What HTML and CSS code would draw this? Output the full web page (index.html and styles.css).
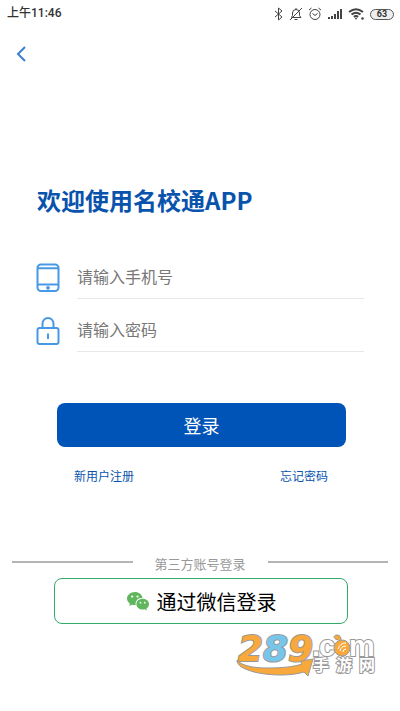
FILE: index.html
```html
<!DOCTYPE html>
<html lang="zh-CN">
<head>
<meta charset="utf-8">
<meta name="viewport" content="width=device-width, initial-scale=1">
<title>登录</title>
<link rel="stylesheet" href="styles.css">
</head>
<body>
<div class="status">
  <span>上午11:46</span>
  <div class="status-icons">
    <svg width="10" height="14" viewBox="0 0 10 14"><path d="M1 4l7 6-3.500 3V1L8 4l-7 6"/></svg>
    <svg width="14" height="14" viewBox="0 0 14 14"><path d="M2.500 10.500h9.500l-1.500-2V6a3.500 3.500 0 0 0-7 0v2.500zM5.500 12.500h3M13 1L1 13M7 1v1.500"/></svg>
    <svg width="14" height="14" viewBox="0 0 14 14"><circle cx="7" cy="7.500" r="5"/><path d="M4.500 6.500L7 8.500l2.500-2M1 3l2.500-2M13 3l-2.500-2"/></svg>
    <svg class="solid" width="16" height="14" viewBox="0 0 16 14"><path d="M1 10h2v2H1zM4 9h2v3H4zM7 7h2v5H7zM10 4h2v8h-2zM13 2h2v10h-2z"/></svg>
    <svg width="17" height="14" viewBox="0 0 17 14"><path class="bold" d="M1 5q7-5.500 14 0M3.500 7.500q4.500-3.500 9 0M5.800 9.800q2.200-1.500 4.400 0"/><path class="dot" d="M8 10.500l1.200 1L8 12.800l-1.200-1.300z"/><circle class="dot" cx="14.500" cy="11.500" r="1.300"/></svg>
    <span class="battery">63</span>
  </div>
</div>
<header class="nav">
  <button class="back" type="button" aria-label="返回">
    <svg width="10" height="16" viewBox="0 0 10 16"><path d="M9 1L2 8l7 7"/></svg>
  </button>
</header>
<main>
  <h1>欢迎使用名校通APP</h1>
  <form class="login">
    <div class="field">
      <label for="phone" aria-label="手机号">
        <svg width="24" height="30" viewBox="0 0 24 30"><rect x="1.500" y="1.500" width="21" height="26.500" rx="3.500"/><path d="M2 5.200h20M2 21.500h20"/><circle class="fill" cx="12" cy="24.800" r="1.900"/></svg>
      </label>
      <input id="phone" type="tel" placeholder="请输入手机号">
    </div>
    <div class="field">
      <label for="password" aria-label="密码">
        <svg width="24" height="30" viewBox="0 0 24 30"><rect x="1.500" y="12" width="21" height="16" rx="2"/><path d="M6.500 12V7.500a5.500 5.500 0 0 1 11 0V12M12 17.500v5.500"/></svg>
      </label>
      <input id="password" type="password" placeholder="请输入密码">
    </div>
    <button class="submit" type="submit">登录</button>
  </form>
  <div class="links"><a href="#register">新用户注册</a><a href="#forgot">忘记密码</a></div>
  <div class="divider">第三方账号登录</div>
  <button class="wechat" type="button">
    <svg width="24" height="20" viewBox="0 0 24 20"><path d="M9 1C4.500 1 1 4 1 7.600c0 2.100 1.100 3.800 2.900 5L3.200 15l2.700-1.300c1 .3 2 .4 3.100.4h.7C9 9.800 12 7 16.600 6.800 15.800 3.400 12.700 1 9 1z"/><path d="M23 13.200c0-3-2.800-5.400-6.300-5.400s-6.300 2.400-6.300 5.400 2.800 5.400 6.300 5.400c.8 0 1.500-.1 2.200-.3l2.100 1.100-.6-1.900c1.600-1 2.600-2.600 2.600-4.300z"/><g class="eyes"><circle cx="6.200" cy="5.600" r="1.100"/><circle cx="11.500" cy="5.600" r="1.100"/><circle cx="14.500" cy="11.700" r=".9"/><circle cx="18.800" cy="11.700" r=".9"/></g></svg>
    通过微信登录
  </button>
</main>
<div class="mark">
  <svg width="142" height="44" viewBox="0 0 142 44">
    <path class="orange" d="M1 28c4 5 14 8 30 8 14 0 26-1 35-4l-2-3 13-2-5 17-4-4C56 44 34 44 18 40 8 37 1 34 1 28z"/>
    <text class="digits" y="29"><tspan class="orange" x="2">2</tspan><tspan class="blue" x="27">8</tspan><tspan class="orange" x="52">9</tspan></text>
    <text class="com" x="76 83 113" y="24">.cm</text>
    <circle class="orange" cx="106" cy="16" r="8"/>
    <path class="orange" d="M102 8c-5-1-5-5-1-5 3 0 4 2 4 5"/>
    <path class="swirl" d="M102 17q2-6 8-6M104 19q1-5 6-5M107 20q0-3 3-3"/>
    <text class="site" x="77 100 123" y="39">手游网</text>
  </svg>
</div>
</body>
</html>
```
FILE: styles.css
```css
* {
  box-sizing: border-box;
}

body {
  margin: 0;
  background: #fff;
  color: #333;
  font-family: "Noto Sans CJK SC", sans-serif;
}

svg {
  display: block;
  flex: none;
  fill: none;
}

button,
input {
  font-family: inherit;
}

button {
  cursor: pointer;
}

.status {
  display: flex;
  align-items: center;
  justify-content: space-between;
  height: 28px;
  padding: 0 6px 0 7px;
  font-family: Roboto, "Noto Sans CJK SC", sans-serif;
  font-size: 12px;
  font-weight: 500;
}

.status > span {
  line-height: 26px;
  align-self: flex-start;
}

.status-icons {
  display: flex;
  align-items: center;
  gap: 5px;
}

.status-icons svg {
  stroke: #444;
}

.status-icons .solid {
  fill: #444;
  stroke: none;
}

.status-icons .bold {
  stroke-width: 2;
}

.status-icons .dot {
  fill: #444;
  stroke: none;
}

.battery {
  width: 24px;
  border: 1px solid #555;
  border-radius: 6px;
  background: #eee;
  font-size: 9px;
  font-weight: 700;
  line-height: 9px;
  text-align: center;
}

.nav {
  display: flex;
  height: 52px;
  padding: 10px 8px;
}

.back {
  display: grid;
  place-items: center;
  width: 26px;
  height: 32px;
  padding: 0;
  border: 0;
  background: none;
}

.back svg {
  stroke: #3b7ed6;
  stroke-width: 2;
}

main {
  padding: 103px 12px 0;
}

h1 {
  margin: 0 25px;
  color: #0953ad;
  font-size: 24px;
  font-weight: 700;
  line-height: 34px;
}

.login {
  display: flex;
  flex-direction: column;
  padding: 29px 24px 0;
}

.field {
  display: flex;
  align-items: center;
  gap: 17px;
  height: 53px;
}

.field label {
  padding-top: 10px;
}

.field svg {
  stroke: #4699e4;
  stroke-width: 2;
}

.field .fill {
  fill: #4699e4;
  stroke: none;
}

.field input {
  flex: 1;
  min-width: 0;
  height: 100%;
  padding: 8px 0 0;
  border: 0;
  border-bottom: 1px solid #e8e8e8;
  outline: 0;
  background: none;
  color: #333;
  font-size: 16px;
}

.field input::placeholder {
  color: #777;
  opacity: 1;
}

.submit {
  height: 44px;
  margin: 51px 18px 0 21px;
  border: 0;
  border-radius: 8px;
  background: #0054b8;
  color: #fff;
  font-size: 18px;
}

.links {
  display: flex;
  justify-content: space-between;
  margin: 20px 60px 0 62px;
  font-size: 12px;
  line-height: 18px;
}

.links a {
  color: #0953ad;
  text-decoration: none;
}

.divider {
  display: flex;
  justify-content: space-between;
  gap: 22px;
  margin-top: 68px;
  color: #999;
  font-size: 13px;
  line-height: 22px;
}

.divider::before,
.divider::after {
  content: "";
  flex: 1;
  height: 2px;
  margin-top: 8px;
  background: #b4b4b4;
}

.wechat {
  display: flex;
  align-items: center;
  justify-content: center;
  gap: 7px;
  width: calc(100% - 82px);
  height: 46px;
  margin: 3px 40px 0 42px;
  padding: 0;
  border: 1px solid #2faa69;
  border-radius: 8px;
  background: #fff;
  color: #000;
  font-size: 20px;
}

.wechat svg {
  fill: #60b65c;
}

.wechat .eyes {
  fill: #fff;
}

.mark {
  display: flex;
  justify-content: flex-end;
  margin-top: 8px;
  padding-right: 22px;
}

.mark svg {
  overflow: visible;
  stroke: #999;
  stroke-width: 1;
}

.mark text {
  paint-order: stroke;
  stroke-width: 2;
}

.mark .orange {
  fill: #f9a83b;
}

.mark .blue {
  fill: #78c5ea;
}

.mark .digits {
  font: italic 700 36px "DejaVu Sans", sans-serif;
}

.mark .com {
  fill: #fff;
  font: 700 29px "Liberation Sans", sans-serif;
}

.mark .site {
  fill: #fff;
  font-size: 16px;
  font-weight: 700;
}

.mark .swirl {
  stroke: #fff;
}
```
